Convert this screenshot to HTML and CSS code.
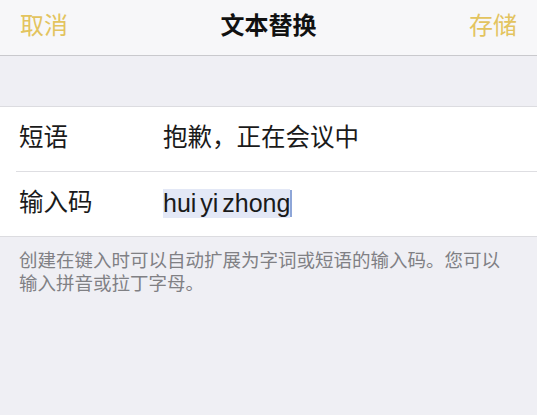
FILE: index.html
```html
<!DOCTYPE html>
<html lang="zh-CN">
<head>
    <meta charset="UTF-8">
    <meta name="viewport" content="width=device-width, initial-scale=1.0">
    <title>文本替换</title>
    <link rel="stylesheet" href="styles.css">
</head>
<body>
    <div class="navbar">
        <span class="nav-btn">取消</span>
        <span class="nav-title">文本替换</span>
        <span class="nav-btn">存储</span>
    </div>

    <div class="spacer"></div>

    <div class="group">
        <div class="row">
            <span class="row-label">短语</span>
            <span class="row-value">抱歉，正在会议中</span>
        </div>
        <div class="row">
            <span class="row-label">输入码</span>
            <span class="row-value"><span class="selected">hui yi zhong</span><span class="caret"></span></span>
        </div>
    </div>

    <p class="footer-note">创建在键入时可以自动扩展为字词或短语的输入码。您可以输入拼音或拉丁字母。</p>
</body>
</html>
```

FILE: styles.css
```css
html, body {
    height: 100%;
}
body {
    margin: 0;
    background-color: #efeff4;
    font-family: "Liberation Sans", "Noto Sans CJK SC", sans-serif;
    color: #1a1a1a;
}
.navbar {
    height: 56px;
    display: flex;
    align-items: center;
    justify-content: space-between;
    padding: 0 20px;
    background-color: #f7f7f9;
    border-bottom: 1px solid #c9c9cd;
    box-sizing: border-box;
}
.nav-btn {
    color: #e3c45f;
    font-size: 24px;
    line-height: 1;
    margin-top: -3px;
}
.nav-title {
    font-size: 24px;
    font-weight: bold;
    line-height: 1;
    margin-top: -3px;
    color: #111;
}
.spacer {
    height: 50px;
}
.group {
    background-color: #fff;
    border-top: 1px solid #dcdce0;
    border-bottom: 1px solid #dcdce0;
    padding-left: 16px;
}
.row {
    height: 64px;
    display: flex;
    align-items: center;
    font-size: 24.5px;
}
.row + .row {
    border-top: 1px solid #dedee2;
}
.row-label {
    width: 144px;
    padding-left: 3px;
    line-height: 1;
    margin-top: -1px;
}
.row-value {
    display: flex;
    align-items: center;
    line-height: 1;
    margin-top: -1px;
}
.selected {
    background-color: #e3e8f6;
    font-size: 25px;
    word-spacing: -3px;
    padding: 2px 0;
}
.caret {
    width: 2px;
    height: 27px;
    background-color: #8ea6d8;
}
.footer-note {
    margin: 0;
    padding: 12px 30px 0 19px;
    font-size: 18.5px;
    line-height: 23px;
    color: #808084;
}
```
